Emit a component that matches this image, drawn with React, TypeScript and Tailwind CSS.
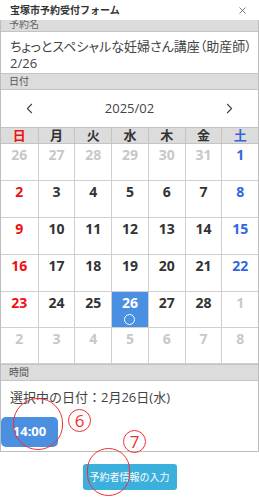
import { ChevronLeft, ChevronRight, X } from 'lucide-react';

const font = { fontFamily: '"Open Sans", "Noto Sans CJK JP", sans-serif' };

const weekdays = ['日', '月', '火', '水', '木', '金', '土'];

type Day = { n: number; cur: boolean; sel?: boolean };

// February 2025 with the trailing/leading days of the neighbour months
const weeks: Day[][] = [
  [26, 27, 28, 29, 30, 31].map((n) => ({ n, cur: false })).concat([{ n: 1, cur: true }]),
  [2, 3, 4, 5, 6, 7, 8].map((n) => ({ n, cur: true })),
  [9, 10, 11, 12, 13, 14, 15].map((n) => ({ n, cur: true })),
  [16, 17, 18, 19, 20, 21, 22].map((n) => ({ n, cur: true })),
  [23, 24, 25, 26, 27, 28].map((n) => ({ n, cur: true, sel: n === 26 })).concat([{ n: 1, cur: false }]),
  [2, 3, 4, 5, 6, 7, 8].map((n) => ({ n, cur: false })),
];

function dayColor(d: Day, col: number) {
  if (d.sel) return 'text-white';
  if (!d.cur) return 'text-[#c8c8c8]';
  if (col === 0) return 'text-[#f01010]';
  if (col === 6) return 'text-[#3366dd]';
  return 'text-[#333]';
}

function SectionBar({ label }: { label: string }) {
  return (
    <div className="h-[17px] flex items-center px-[8px] bg-[#dcdcdc] border-y border-[#c4c4c4] text-[10px] text-[#555]">
      {label}
    </div>
  );
}

export default function App() {
  return (
    <div className="relative w-[259px] h-[500px] overflow-hidden bg-white" style={font}>
      {/* Header */}
      <div className="h-[20px] flex items-center justify-between pl-[10px] pr-[11px]">
        <span className="text-[10px] font-bold text-[#333]">宝塚市予約受付フォーム</span>
        <X size={11} strokeWidth={1.5} className="text-[#444]" />
      </div>

      <div className="border-l border-r border-[#bdbdbd]">
        {/* 予約名 (scrolled, top cut) */}
        <div className="h-[12px] overflow-hidden bg-[#dcdcdc] border-b border-[#c4c4c4] px-[8px]">
          <div className="text-[10px] text-[#666] leading-[10px] -mt-[1px]">予約名</div>
        </div>
        <div className="h-[41px] pl-[9px] pr-[2px] pt-[6px] text-[13px] leading-[17px] text-[#444] whitespace-nowrap [font-feature-settings:'palt']">
          ちょっとスペシャルな妊婦さん講座（助産師）
          <br />
          2/26
        </div>

        <SectionBar label="日付" />

        {/* Month navigation */}
        <div className="h-[37px] flex items-center justify-between px-[20px] text-[#444]">
          <ChevronLeft size={17} strokeWidth={1.5} />
          <span className="text-[13px]">2025/02</span>
          <ChevronRight size={17} strokeWidth={1.5} />
        </div>

        {/* Calendar */}
        <div className="grid grid-cols-7 border-t border-[#c4c4c4]">
          {weekdays.map((w, i) => (
            <div
              key={w}
              className={`h-[16px] flex items-center justify-center bg-[#dcdcdc] text-[13px] font-bold border-b border-[#c4c4c4] ${i > 0 ? 'border-l' : ''} ${
                i === 0 ? 'text-[#f01010]' : i === 6 ? 'text-[#3366dd]' : 'text-[#333]'
              }`}
            >
              {w}
            </div>
          ))}
          {weeks.map((week, r) =>
            week.map((d, i) => (
              <div
                key={`${r}-${i}`}
                className={`flex flex-col items-center pt-[2px] border-b border-[#cfcfcf] ${i > 0 ? 'border-l' : ''} ${
                  d.sel ? 'bg-[#4a90e2]' : ''
                } ${r >= 4 ? 'h-[36px]' : 'h-[37px]'}`}
              >
                <span className={`text-[14px] font-bold leading-[18px] ${dayColor(d, i)}`}>{d.n}</span>
                {d.sel && (
                  <span className="mt-[2px] w-[11px] h-[11px] rounded-full border-[1.5px] border-white" />
                )}
              </div>
            ))
          )}
        </div>

        <SectionBar label="時間" />

        {/* Time selection */}
        <div className="h-[70px] pt-[7px]">
          <div className="px-[9px] text-[13px] leading-[18px] text-[#444]">選択中の日付：2月26日(水)</div>
          <div className="mt-[11px] w-[57px] h-[30px] rounded-[5px] bg-[#4a8fe0] flex items-center justify-center text-white text-[13px] font-bold">
            14:00
          </div>
        </div>
      </div>

      {/* Footer */}
      <div className="border-t border-[#bdbdbd] flex justify-center pt-[12px]">
        <button className="w-[94px] h-[26px] rounded-[3px] bg-[#3cb0dc] text-white text-[10px]">
          予約者情報の入力
        </button>
      </div>

      {/* Annotations drawn over the screenshot */}
      <div className="absolute left-[13px] top-[398px] w-[50px] h-[52px] rounded-full border-[1.5px] border-[#f03030]" />
      <div className="absolute left-[68px] top-[409px] w-[23px] h-[23px] rounded-full border-[1.5px] border-[#f03030] flex items-center justify-center text-[#f03030] text-[17px] leading-none">
        6
      </div>
      <div className="absolute left-[123px] top-[430px] w-[23px] h-[23px] rounded-full border-[1.5px] border-[#f03030] flex items-center justify-center text-[#f03030] text-[17px] leading-none">
        7
      </div>
      <div className="absolute left-[87px] top-[448px] w-[43px] h-[48px] rounded-full border-[1.5px] border-[#f03030]" />
    </div>
  );
}
